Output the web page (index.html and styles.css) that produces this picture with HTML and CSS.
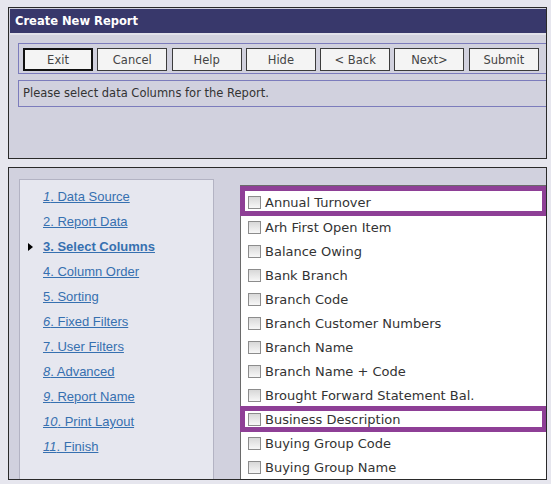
FILE: index.html
```html
<!DOCTYPE html>
<html lang="en">
<head>
    <meta charset="UTF-8">
    <title>Create New Report</title>
    <link rel="stylesheet" href="styles.css">
</head>
<body>

<div class="page">
    <!-- top panel: title, wizard buttons, hint -->
    <div class="dialog">
        <div class="title">Create New Report</div>
        <div class="toolbar">
            <button class="btn default">Exit</button>
            <button class="btn">Cancel</button>
            <button class="btn">Help</button>
            <button class="btn">Hide</button>
            <button class="btn">&lt; Back</button>
            <button class="btn">Next&gt;</button>
            <button class="btn">Submit</button>
        </div>
        <div class="message">Please select data Columns for the Report.</div>
    </div>

    <!-- bottom panel: steps on the left, column picker on the right -->
    <div class="main">
        <div class="steps">
            <ul class="step-list">
                <li><span class="marker"></span><a href="#"><i>1</i>. Data Source</a></li>
                <li><span class="marker"></span><a href="#">2. Report Data</a></li>
                <li class="current"><span class="marker"></span><a href="#">3. Select Columns</a></li>
                <li><span class="marker"></span><a href="#">4. Column Order</a></li>
                <li><span class="marker"></span><a href="#">5. Sorting</a></li>
                <li><span class="marker"></span><a href="#"><i>6</i>. Fixed Filters</a></li>
                <li><span class="marker"></span><a href="#">7. User Filters</a></li>
                <li><span class="marker"></span><a href="#"><i>8</i>. Advanced</a></li>
                <li><span class="marker"></span><a href="#"><i>9</i>. Report Name</a></li>
                <li><span class="marker"></span><a href="#"><i>10</i>. Print Layout</a></li>
                <li><span class="marker"></span><a href="#"><i>11</i>. Finish</a></li>
            </ul>
        </div>

        <div class="columns">
            <div class="col-row marked first"><span class="check"></span>Annual Turnover</div>
            <div class="col-row"><span class="check"></span>Arh First Open Item</div>
            <div class="col-row"><span class="check"></span>Balance Owing</div>
            <div class="col-row"><span class="check"></span>Bank Branch</div>
            <div class="col-row"><span class="check"></span>Branch Code</div>
            <div class="col-row"><span class="check"></span>Branch Customer Numbers</div>
            <div class="col-row"><span class="check"></span>Branch Name</div>
            <div class="col-row"><span class="check"></span>Branch Name + Code</div>
            <div class="col-row"><span class="check"></span>Brought Forward Statement Bal.</div>
            <div class="col-row marked"><span class="check"></span>Business Description</div>
            <div class="col-row"><span class="check"></span>Buying Group Code</div>
            <div class="col-row"><span class="check"></span>Buying Group Name</div>
        </div>
    </div>
</div>

</body>
</html>
```

FILE: styles.css
```css
/* page */
body {
    margin: 0;
    background-color: #e6e6ee;
    font-family: "DejaVu Sans", Verdana, sans-serif;
    color: #333;
}
.page {
    padding: 7px 4px 0 8px;
}

/* top panel */
.dialog {
    height: 149px;
    padding-top: 1px;
    padding-left: 1px;
    background-color: #d1d1de;
    border: 1px solid #2a2a2a;
    overflow: hidden;
}
.title {
    height: 24px;
    line-height: 24px;
    padding-left: 5px;
    background-color: #38386b;
    border-bottom: 2px solid #e1e1ea;
    color: #fff;
    font-size: 11.5px;
    font-weight: bold;
}
.toolbar {
    display: flex;
    gap: 4.3px;
    margin: 8px 0 0 8px;
    padding: 4px 4px 2px 4px;
    border: 1px solid #7c7cbc;
    border-right: none;
}
.btn {
    width: 70px;
    height: 23px;
    padding: 0;
    background-color: #f4f4f4;
    border: 1px solid #3c3c3c;
    font-family: "DejaVu Sans", Verdana, sans-serif;
    font-size: 11.5px;
    color: #444;
}
.btn.default {
    border: 2px solid #111;
}
.message {
    height: 25px;
    line-height: 25px;
    margin: 6px 0 0 8px;
    padding-left: 4px;
    border: 1px solid #7c7cbc;
    border-right: none;
    font-size: 11.5px;
}

/* bottom panel */
.main {
    display: flex;
    height: 300px;
    margin-top: 8px;
    padding: 11px 0 0 10px;
    background-color: #d1d1de;
    border: 1px solid #2a2a2a;
    overflow: hidden;
}
.steps {
    width: 193px;
    flex-shrink: 0;
    background-color: #e6e7ef;
    border: 1px solid #b3b3c3;
    border-bottom: none;
}
.step-list {
    list-style: none;
    margin: 0;
    padding: 4px 0 0 0;
    font-family: "Liberation Sans", Arial, sans-serif;
    font-size: 13px;
}
.step-list li {
    display: flex;
    align-items: center;
    height: 25px;
}
.step-list a {
    color: #3670b0;
    text-decoration: underline;
}
.marker {
    width: 23px;
    flex-shrink: 0;
}
.current a {
    font-weight: bold;
}
.current .marker::before {
    content: "";
    display: block;
    width: 0;
    height: 0;
    margin-left: 8px;
    border-left: 5px solid #000;
    border-top: 4px solid transparent;
    border-bottom: 4px solid transparent;
}

/* column picker */
.columns {
    flex: 1;
    margin: 6px 0 0 26px;
    padding-top: 1px;
    background-color: #fff;
    border: 1px solid #6a6a6a;
    border-right: none;
    border-bottom: none;
    font-size: 13px;
}
.col-row {
    display: flex;
    align-items: center;
    gap: 4px;
    height: 24px;
    padding-left: 7px;
    color: #333;
    white-space: nowrap;
}
.col-row.first {
    height: 28px;
    padding-top: 2px;
    box-sizing: border-box;
}
.col-row.marked {
    outline: 5px solid #8e3f96;
    outline-offset: -4px;
}
.check {
    width: 13px;
    height: 13px;
    box-sizing: border-box;
    border: 1px solid #8c8c8c;
    background: linear-gradient(#d8d8d8, #f7f7f7);
}
```
